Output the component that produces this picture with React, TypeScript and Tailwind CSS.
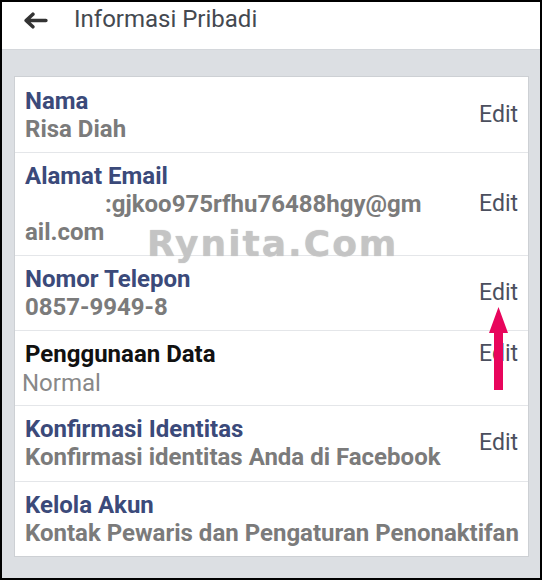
import { ReactNode } from 'react';

interface RowProps {
    label: string;
    value?: ReactNode;
    labelDark?: boolean;
    editTop?: boolean;
    showEdit?: boolean;
    first?: boolean;
    valueClass?: string;
    padBottom?: string;
}

function InfoRow({
    label,
    value,
    labelDark,
    editTop,
    showEdit = true,
    first,
    valueClass = 'text-[24px] leading-[28px] font-bold text-[#7b7b7b]',
    padBottom = 'pb-[9px]',
}: RowProps) {
    return (
        <div
            className={`flex justify-between pl-[10px] pr-[10px] pt-[9px] ${padBottom} ${
                first ? 'border-t border-transparent' : 'border-t border-[#e4e6e9]'
            } ${editTop ? 'items-start' : 'items-center'}`}
        >
            <div className="flex flex-col whitespace-nowrap">
                <span
                    className={`text-[24px] leading-[28px] font-bold ${
                        labelDark ? 'text-[#111]' : 'text-[#3b4a7a]'
                    }`}
                >
                    {label}
                </span>
                <span className={valueClass}>{value}</span>
            </div>
            {showEdit && (
                <span className="text-[23px] leading-[28px] text-[#4b4f5e] pl-2">Edit</span>
            )}
        </div>
    );
}

export default function App() {
    return (
        <div
            className="relative w-[542px] h-[580px] border-2 border-black bg-[#dcdfe3] overflow-hidden"
            style={{ fontFamily: 'Roboto, "Noto Sans", sans-serif' }}
        >
            {/* Header */}
            <div className="h-[48px] bg-white flex items-center border-b border-[#d4d7db]">
                <svg
                    viewBox="0 0 24 16"
                    className="ml-[21px] w-[25px] h-[17px] -mt-[11px]"
                    fill="none"
                    stroke="#333"
                    strokeWidth="3.4"
                    strokeLinecap="round"
                    strokeLinejoin="round"
                >
                    <path d="M22 8H3M9.5 2L3 8l6.5 6" />
                </svg>
                <span className="ml-[26px] -mt-[14px] text-[24px] text-[#444950]">
                    Informasi Pribadi
                </span>
            </div>

            {/* Card */}
            <div className="mt-[26px] ml-[12px] w-[515px] bg-white border border-[#cdd0d4]">
                <InfoRow first label="Nama" value="Risa Diah" />
                <InfoRow
                    label="Alamat Email"
                    value={
                        <>
                            <span className="pl-[80px]">:gjkoo975rfhu76488hgy@gm</span>
                            <br />
                            ail.com
                        </>
                    }
                />
                <InfoRow label="Nomor Telepon" value="0857-9949-8" />
                <InfoRow
                    label="Penggunaan Data"
                    labelDark
                    editTop
                    value={<span className="-ml-[3px]">Normal</span>}
                    valueClass="text-[24px] leading-[31px] text-[#888]"
                    padBottom="pb-[6px]"
                />
                <InfoRow
                    label="Konfirmasi Identitas"
                    value="Konfirmasi identitas Anda di Facebook"
                    padBottom="pb-[10px]"
                />
                <InfoRow
                    label="Kelola Akun"
                    showEdit={false}
                    value="Kontak Pewaris dan Pengaturan Penonaktifan"
                />
            </div>

            {/* Watermark */}
            <div
                className="absolute left-[145px] top-[215px] text-[36px] font-bold tracking-[2px] text-[#c6c6c6]/90 [text-shadow:0_0_1px_#bbb]"
                style={{ fontFamily: '"DejaVu Sans", sans-serif' }}
            >
                Rynita.Com
            </div>

            {/* Pink arrow */}
            <svg
                viewBox="0 0 19 83"
                className="absolute left-[487px] top-[305px] w-[19px] h-[83px]"
            >
                <path d="M9.5 0L19 26h-5v57H5V26H0z" fill="#e8055c" />
            </svg>
        </div>
    );
}
